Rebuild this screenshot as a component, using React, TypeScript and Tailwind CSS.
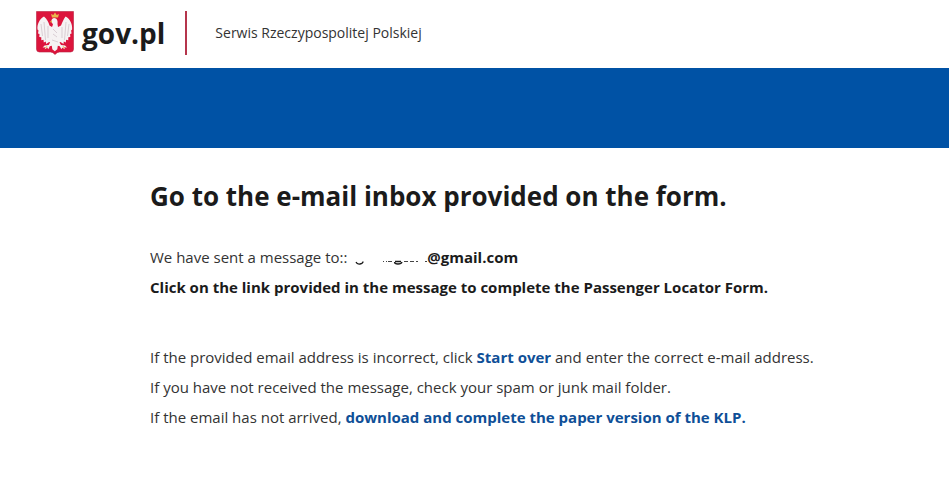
function Eagle() {
  return (
    <svg viewBox="0 0 38 44" className="h-11 w-[38px] shrink-0" role="img" aria-label="Godło">
      <path d="M.5.5h37v37.5q0 3-3 3h-11q-2.500 0-4.500 2.500-2-2.500-4.500-2.500h-11q-3 0-3-3z" fill="#dc143c" stroke="#b8223f" strokeWidth=".6" />
      <path
        d="M18 7c-2 .5-3 2-2.500 4l1.500 2.500-1 2.500-2.500-1.500C12.500 11 11 8 8 5.500 3.500 8 1 13 1.500 18.500l1 1-.5 3 1.500.5-.2 3 2 .2v3l2.200-.4.300 2.700 2-1 .3 2.500 3-2 1 .5-1.500 2.500-4 .5-2 2 3-.3-1 2 2.700-1.500 1 1.500 1.500-3 2-.5.5 3.500 2.500 2 2.500-2 .5-3.500 2 .5 1.500 3 1-1.500 2.700 1.500-1-2 3 .3-2-2-4-.5-1.500-2.500 1-.5 3 2 .3-2.500 2 1 .3-2.700 2.200.4v-3l2-.2-.2-3 1.500-.5-.5-3 1-1c.5-5.500-2-10.500-6.500-13C27.500 8 26.500 11 25 14.500L22 16l-.5-3c.5-3-.5-6-3.500-6z"
        fill="#f5f2f3"
      />
      <path d="M5 13l1.500 12M8 11l1.500 18M12 15v12M33 13l-1.500 12M30 11l-1.500 18M26 16v11M17 18l4 4M17 23l4 3M16 29l6 2" stroke="#cdbfc6" strokeWidth=".7" fill="none" />
      <path d="M16 6.500l-1-3.500 2.300 1L19 1.500 20.700 4l2.300-1-1 3.500z" fill="#e9b64d" />
      <path d="M13.500 11l2.500-1.500v2zM11 35l-2.500 2 3-.5zM27 35l2.500 2-3-.5z" fill="#e9b64d" />
    </svg>
  );
}

export default function App() {
  return (
    <div className="min-h-screen bg-white font-['Open_Sans',sans-serif] text-[15px] leading-[30px] text-[#1b1b1b]">
      <header className="flex h-[66px] items-center pl-9">
        <a href="#" className="flex items-center gap-2 text-[28px] font-bold">
          <Eagle />
          gov.pl
        </a>
        <span className="ml-5 h-11 w-0.5 bg-[#b5354c]" />
        <span className="ml-7 text-sm text-[#333]">Serwis Rzeczypospolitej Polskiej</span>
      </header>
      <div className="mt-0.5 h-20 bg-[#0052a5]" />

      <main className="pr-12 pl-[150px] pt-7 text-[#333]">
        <h1 className="text-[26px] leading-10 font-bold text-[#1b1b1b]">Go to the e-mail inbox provided on the form.</h1>
        <div className="mt-[26px]">
          <p>
            We have sent a message to::{' '}
            <svg viewBox="0 0 76 20" className="inline h-5 w-[76px]" aria-hidden="true">
              <path d="M32 12.500h1M35 12.500h1M37 12.500h4M53 12.500h4M59 12.500h4M65 12.500h2M74 12.500h2" stroke="#444" fill="none" />
              <path d="M5 13q1 2.500 4 2t3-2.500M44 12.500h6M43.500 13q0 2 3.500 2t4-2" stroke="#1b1b1b" strokeWidth="1.300" fill="none" />
            </svg>
            <b className="font-bold text-[#1b1b1b]">@gmail.com</b>
          </p>
          <p className="font-bold text-[#1b1b1b]">Click on the link provided in the message to complete the Passenger Locator Form.</p>
        </div>
        <div className="mt-10">
          <p>
            If the provided email address is incorrect, click{' '}
            <a href="#" className="font-bold text-[#0f4f97]">Start over</a> and enter the correct e-mail address.
          </p>
          <p>If you have not received the message, check your spam or junk mail folder.</p>
          <p>
            If the email has not arrived,{' '}
            <a href="#" className="font-bold text-[#0f4f97]">download and complete the paper version of the KLP.</a>
          </p>
        </div>
      </main>
    </div>
  );
}
